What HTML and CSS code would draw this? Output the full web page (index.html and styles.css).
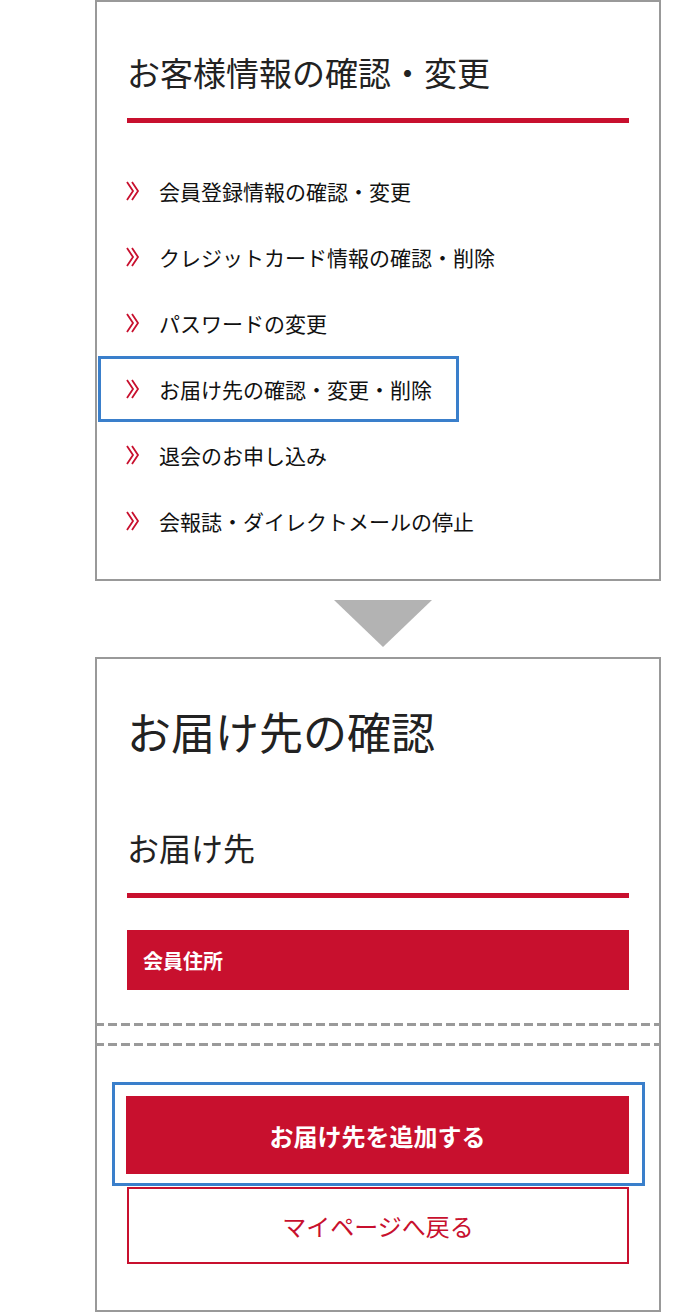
FILE: index.html
```html
<!DOCTYPE html>
<html lang="ja">
<head>
    <meta charset="utf-8">
    <title>お客様情報の確認・変更</title>
    <link rel="stylesheet" href="styles.css">
</head>
<body>
    <div class="flow">
        <!-- step 1: account menu -->
        <section class="panel panel-menu">
            <h2 class="section-title">お客様情報の確認・変更</h2>
            <ul class="menu">
                <li><a href="#"><svg class="chev" viewBox="0 0 14 20"><polyline points="1,1 7,10 1,19"/><polyline points="6,1 12,10 6,19"/></svg>会員登録情報の確認・変更</a></li>
                <li><a href="#"><svg class="chev" viewBox="0 0 14 20"><polyline points="1,1 7,10 1,19"/><polyline points="6,1 12,10 6,19"/></svg>クレジットカード情報の確認・削除</a></li>
                <li><a href="#"><svg class="chev" viewBox="0 0 14 20"><polyline points="1,1 7,10 1,19"/><polyline points="6,1 12,10 6,19"/></svg>パスワードの変更</a></li>
                <li><a href="#" class="marked"><svg class="chev" viewBox="0 0 14 20"><polyline points="1,1 7,10 1,19"/><polyline points="6,1 12,10 6,19"/></svg>お届け先の確認・変更・削除</a></li>
                <li><a href="#"><svg class="chev" viewBox="0 0 14 20"><polyline points="1,1 7,10 1,19"/><polyline points="6,1 12,10 6,19"/></svg>退会のお申し込み</a></li>
                <li><a href="#"><svg class="chev" viewBox="0 0 14 20"><polyline points="1,1 7,10 1,19"/><polyline points="6,1 12,10 6,19"/></svg>会報誌・ダイレクトメールの停止</a></li>
            </ul>
        </section>

        <div class="step-arrow"></div>

        <!-- step 2: delivery address -->
        <section class="panel panel-address">
            <h1 class="page-title">お届け先の確認</h1>
            <h2 class="sub-title">お届け先</h2>
            <div class="address-bar">会員住所</div>
            <div class="cut"></div>
            <div class="marked-box">
                <button class="btn btn-primary">お届け先を追加する</button>
            </div>
            <button class="btn btn-outline">マイページへ戻る</button>
        </section>
    </div>
</body>
</html>
```

FILE: styles.css
```css
body {
    margin: 0;
    padding: 0;
    background-color: #FFFFFF;
    font-family: "Noto Sans CJK JP", "Noto Sans", sans-serif;
    color: #1a1a1a;
}
.flow {
    width: 566px;
    margin-left: 95px;
}
.panel {
    border: 2px solid #999999;
    padding: 0 30px;
    background-color: #FFFFFF;
}
.panel-menu {
    padding-top: 48px;
    padding-bottom: 25px;
}
.section-title {
    font-size: 33px;
    font-weight: 400;
    line-height: 45px;
    margin: 0;
    padding-bottom: 23px;
    border-bottom: 5px solid #c8102e;
    color: #222;
}
.menu {
    list-style: none;
    margin: 35px 0 0 0;
    padding: 0;
}
.menu li {
    height: 66px;
}
.menu a {
    display: inline-flex;
    align-items: center;
    height: 66px;
    box-sizing: border-box;
    margin-left: -29px;
    padding: 0 24px 0 25px;
    border: 3px solid transparent;
    font-size: 21px;
    color: #111;
    text-decoration: none;
}
.menu a.marked {
    border-color: #3a7fcb;
}
.chev {
    width: 14px;
    height: 20px;
    margin-right: 19px;
    fill: none;
    stroke: #c8102e;
    stroke-width: 1.8;
}
.step-arrow {
    width: 0;
    height: 0;
    margin: 19px 0 10px 239px;
    border-left: 49px solid transparent;
    border-right: 49px solid transparent;
    border-top: 47px solid #b3b3b3;
}
.panel-address {
    padding-top: 41px;
    padding-bottom: 46px;
}
.page-title {
    font-size: 44px;
    font-weight: 400;
    line-height: 63px;
    margin: 0;
    color: #222;
}
.sub-title {
    font-size: 32px;
    font-weight: 400;
    line-height: 45px;
    margin: 62px 0 0 0;
    padding-bottom: 23px;
    border-bottom: 5px solid #c8102e;
    color: #222;
}
.address-bar {
    margin-top: 32px;
    height: 60px;
    box-sizing: border-box;
    padding-left: 16px;
    display: flex;
    align-items: center;
    background-color: #c8102e;
    color: #FFFFFF;
    font-size: 20px;
    font-weight: 700;
}
.cut {
    margin: 33px -32px 0 -32px;
    height: 17px;
    border-top: 3px solid transparent;
    border-bottom: 3px solid transparent;
    background:
        repeating-linear-gradient(90deg, #9a9a9a 0 9px, transparent 9px 13px) top / 100% 3px no-repeat border-box,
        repeating-linear-gradient(90deg, #9a9a9a 0 9px, transparent 9px 13px) bottom / 100% 3px no-repeat border-box;
}
.marked-box {
    margin: 36px -16px 0 -15px;
    border: 3px solid #3a7fcb;
    padding: 11px 13px 9px 11px;
}
.btn {
    display: block;
    width: 100%;
    height: 78px;
    box-sizing: border-box;
    font-family: "Noto Sans CJK JP", "Noto Sans", sans-serif;
    font-size: 24px;
    cursor: pointer;
}
.btn-primary {
    background-color: #c8102e;
    color: #FFFFFF;
    border: none;
    font-weight: 700;
}
.btn-outline {
    margin-top: 1px;
    height: 77px;
    background-color: #FFFFFF;
    color: #c8102e;
    border: 2px solid #c8102e;
    font-weight: 400;
}
```
